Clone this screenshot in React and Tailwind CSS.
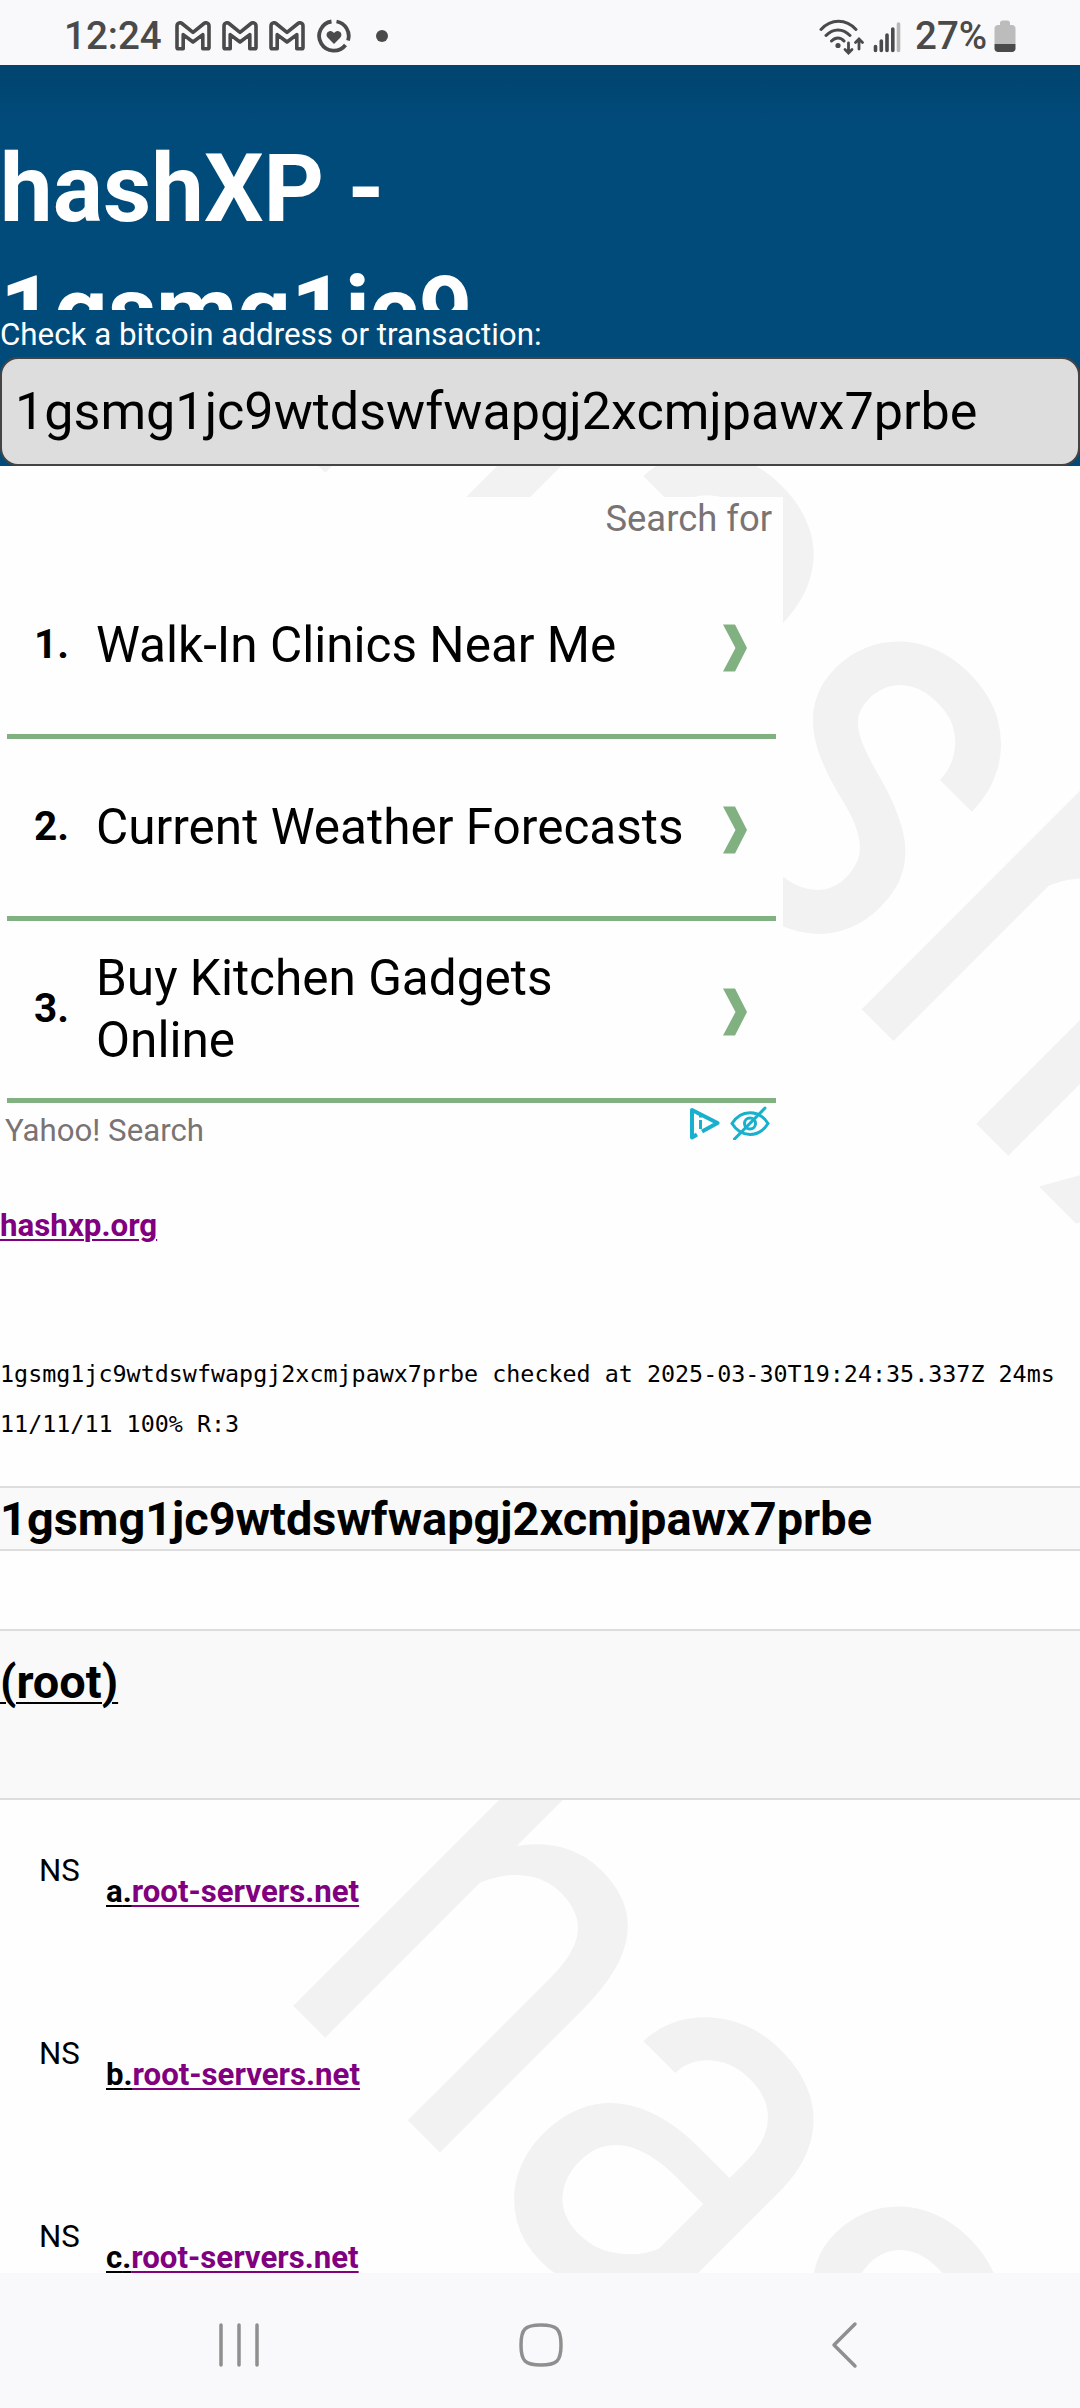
const DARK = '#4a4a4a';

function Gmail() {
  return (
    <svg width="36" height="30" viewBox="0 0 36 30" className="shrink-0" fill="none" stroke={DARK} strokeWidth="3.600" strokeLinejoin="round">
      <path d="M2 26.500V5c0-3 3-4 5-2.500l11 8.800 11-8.800c2-1.500 5-.5 5 2.500v21.500c0 .8-.5 1.300-1.300 1.300h-4.900V13.600L18 21 8.200 13.600v14.200H3.300c-.8 0-1.300-.5-1.300-1.300z" />
    </svg>
  );
}

function HeartRing() {
  return (
    <svg width="34" height="34" viewBox="0 0 34 34" className="shrink-0" fill="none" stroke={DARK} strokeWidth="3.800">
      <path d="M19.500 2.500A14.700 14.700 0 0 1 31 21.500M28.500 26A14.700 14.700 0 1 1 14.500 2.500" />
      <path fill={DARK} stroke="none" d="M17 25l-6.200-6.300c-3-3.200.1-7.500 3.700-6.500 1 .3 1.900.9 2.500 1.700.6-.8 1.500-1.400 2.500-1.700 3.600-1 6.700 3.300 3.700 6.500z" />
    </svg>
  );
}

function StatusBar() {
  return (
    <div className="relative flex h-[65px] shrink-0 items-start bg-[#f9f9fb] text-[38.5px] font-medium leading-[46px] text-[#4a4a4a]">
      <span className="ml-[64px] mt-[13px] w-[111px]">12:24</span>
      <div className="mt-[21px] flex gap-[11px]">
        <Gmail />
        <Gmail />
        <Gmail />
      </div>
      <div className="ml-[12px] mt-[19px]">
        <HeartRing />
      </div>
      <span className="ml-[25px] mt-[30px] size-[12px] rounded-full bg-[#4a4a4a]" />
      <div className="ml-auto mt-[19px] flex items-start">
        <svg width="46" height="36" viewBox="0 0 46 36" fill="none" stroke={DARK} strokeWidth="3" strokeLinecap="round">
          <path d="M2 10.500C12-.5 27-.5 37 10.500M7 16.500c7-7.500 17-7.500 24 0M12.500 22c4-4 9-4 12.500 0" />
          <circle cx="19" cy="26.500" r="2.600" fill={DARK} stroke="none" />
          <path strokeWidth="2.800" d="M29.500 24v9M26 30.500l3.500 3.500 3.500-3.500M40 30v-9.500M36.500 23.500l3.500-3.500 3.500 3.500" />
        </svg>
        <svg width="28" height="32" viewBox="0 0 28 32" className="ml-[8px] mt-[2px]" strokeLinecap="round" strokeWidth="3.600" stroke={DARK}>
          <path d="M2.500 25.500v4M8.300 20v9.500M14 14v15.500M19.800 8v21.500" />
          <path stroke="#b8b8b8" d="M25.500 3v26.500" />
        </svg>
      </div>
      <span className="ml-[14px] mt-[13px] w-[79px] whitespace-nowrap">27%</span>
      <svg width="22" height="32" viewBox="0 0 22 32" className="mr-[64px] mt-[20px]">
        <path fill="#bcbcbc" d="M6 5V3c0-1.500 1-2.500 2.500-2.500h5C15 .5 16 1.500 16 3v2h2c2 0 3.500 1.500 3.500 3.500V24H.5V8.500C.5 6.500 2 5 4 5z" />
        <path fill={DARK} d="M.5 24h21v4.500c0 2-1.500 3.500-3.500 3.500H4c-2 0-3.500-1.500-3.500-3.500z" />
      </svg>
    </div>
  );
}

function Watermark() {
  return (
    <svg width="1080" height="2408" viewBox="0 0 1080 2408" className="absolute inset-0" aria-hidden="true">
      <g fill="#f2f2f2" fontSize="499" fontFamily="Roboto, sans-serif">
        <text transform="translate(269 416.500) rotate(45) scale(1 1.168)">hashxp</text>
        <text transform="translate(269 1981.500) rotate(45) scale(1 1.168)">hashxp</text>
      </g>
    </svg>
  );
}

function AdRow({ n, children }) {
  return (
    <div className="flex h-[182px] items-center border-b-[5px] border-[#81b081]">
      <span className="mb-[2px] w-[89px] pl-[27px] text-[40.5px] font-bold">{n}.</span>
      <span className="mb-[2px] flex-1 text-[49.5px] leading-[62px]">{children}</span>
      <svg width="26" height="48" viewBox="0 0 26 48" className="mr-[27px] mt-[4px]">
        <path fill="#81b081" d="M0 .5h12l12 23.500-12 23.500H0l12.500-23.500z" />
      </svg>
    </div>
  );
}

function Ad() {
  return (
    <div className="mt-[31px] h-[656px] w-[783px] shrink-0 bg-[#fefefe]">
      <div className="h-[60px] pr-[11px] text-right text-[36.4px] leading-[43px] text-[#7a7374]">Search for</div>
      <div className="mx-[7px] w-[769px]">
        <AdRow n={1}>Walk-In Clinics Near Me</AdRow>
        <AdRow n={2}>Current Weather Forecasts</AdRow>
        <AdRow n={3}>
          Buy Kitchen Gadgets
          <br />
          Online
        </AdRow>
      </div>
      <div className="flex justify-between pl-[5px] pr-[13px] text-[31.2px] leading-[38px] text-[#7a7374]">
        <span className="mt-[9px]">Yahoo! Search</span>
        <div className="mt-[3px] flex gap-[9px]">
          <svg width="34" height="34" viewBox="0 0 34 34" fill="none" stroke="#18b0cc" strokeWidth="4" strokeLinejoin="round">
            <path d="M10 28.500l-5 3V4L30.500 17 15 25.500" />
            <path strokeWidth="3" d="M13.500 14v9M13.500 9v2.600" />
          </svg>
          <svg width="40" height="34" viewBox="0 0 40 34" fill="none" stroke="#18b0cc" strokeWidth="3" strokeLinecap="round">
            <path d="M2 17.500c9-14.500 27-14.500 36 0-9 14.500-27 14.500-36 0zM4.500 33L35 2" />
            <circle cx="20" cy="17.500" r="5.500" />
          </svg>
        </div>
      </div>
    </div>
  );
}

function Record({ host }) {
  return (
    <div className="flex h-[183px] shrink-0">
      <span className="w-[106px] pl-[39px] pt-[52px] text-[31.2px] leading-[38px]">NS</span>
      <a className="pt-[73px] text-[31.2px] font-bold leading-[38px] text-[#800080] underline decoration-2 underline-offset-[3px]">
        <span className="text-black underline decoration-2 underline-offset-[3px]">{host}.</span>root-servers.net
      </a>
    </div>
  );
}

function NavBar() {
  return (
    <div className="relative flex h-[135px] shrink-0 items-start bg-[#f9f9fb] pt-[48px]">
      <svg width="1080" height="48" viewBox="0 0 1080 48" fill="none" stroke="#8f8f8f" strokeWidth="3.500" strokeLinecap="round" strokeLinejoin="round">
        <path d="M221 4v40M239 4v40M257 4v40" />
        <path d="M541 4c16 0 20 4 20 20s-4 20-20 20-20-4-20-20 4-20 20-20z" />
        <path d="M855 3l-21 21 21 21" />
      </svg>
    </div>
  );
}

export default function App() {
  return (
    <div className="relative flex h-[2408px] w-[1080px] flex-col overflow-hidden bg-[#fefefe] font-['Roboto',sans-serif] text-black">
      <Watermark />
      <StatusBar />
      <div className="relative flex min-h-0 flex-1 flex-col overflow-hidden">
        <header className="h-[401px] shrink-0 bg-[#014b7b] bg-linear-to-b from-[#01446f] to-[#014b7b] to-[60px] text-white">
          <h1 className="h-[245px] w-[600px] overflow-hidden pt-[63px] text-[94px] font-bold leading-[122px]">
            hashXP -<br />
            1gsmg1jc9
          </h1>
          <label className="block h-[47px] pt-[5px] text-[31.3px] leading-[40px]">Check a bitcoin address or transaction:</label>
          <div className="flex h-[109px] items-center rounded-[18px] border-2 border-[#444] bg-[#ddd] px-[13px] pt-[2px] text-[52.1px] text-black">
            1gsmg1jc9wtdswfwapgj2xcmjpawx7prbe
          </div>
        </header>
        <Ad />
        <a className="mt-[53px] shrink-0 text-[31.3px] font-bold leading-[40px] text-[#800080] underline decoration-2 underline-offset-[3px]">hashxp.org</a>
        <div className="mt-[103px] h-[137px] shrink-0 whitespace-nowrap font-['DejaVu_Sans_Mono',monospace] text-[23.36px] leading-[50px]">
          1gsmg1jc9wtdswfwapgj2xcmjpawx7prbe checked at 2025-03-30T19:24:35.337Z 24ms
          <br />
          11/11/11 100% R:3
        </div>
        <h2 className="h-[65px] shrink-0 border-y-2 border-[#ddd] bg-[#f9f9f9] text-[46.9px] font-bold leading-[62px]">1gsmg1jc9wtdswfwapgj2xcmjpawx7prbe</h2>
        <h2 className="mt-[78px] h-[171px] shrink-0 border-y-2 border-[#ddd] bg-[#f9f9f9] pt-[20px] text-[46.9px] font-bold leading-[62px]">
          <span className="underline decoration-2 underline-offset-[4px]">(root)</span>
        </h2>
        <Record host="a" />
        <Record host="b" />
        <Record host="c" />
      </div>
      <NavBar />
    </div>
  );
}
